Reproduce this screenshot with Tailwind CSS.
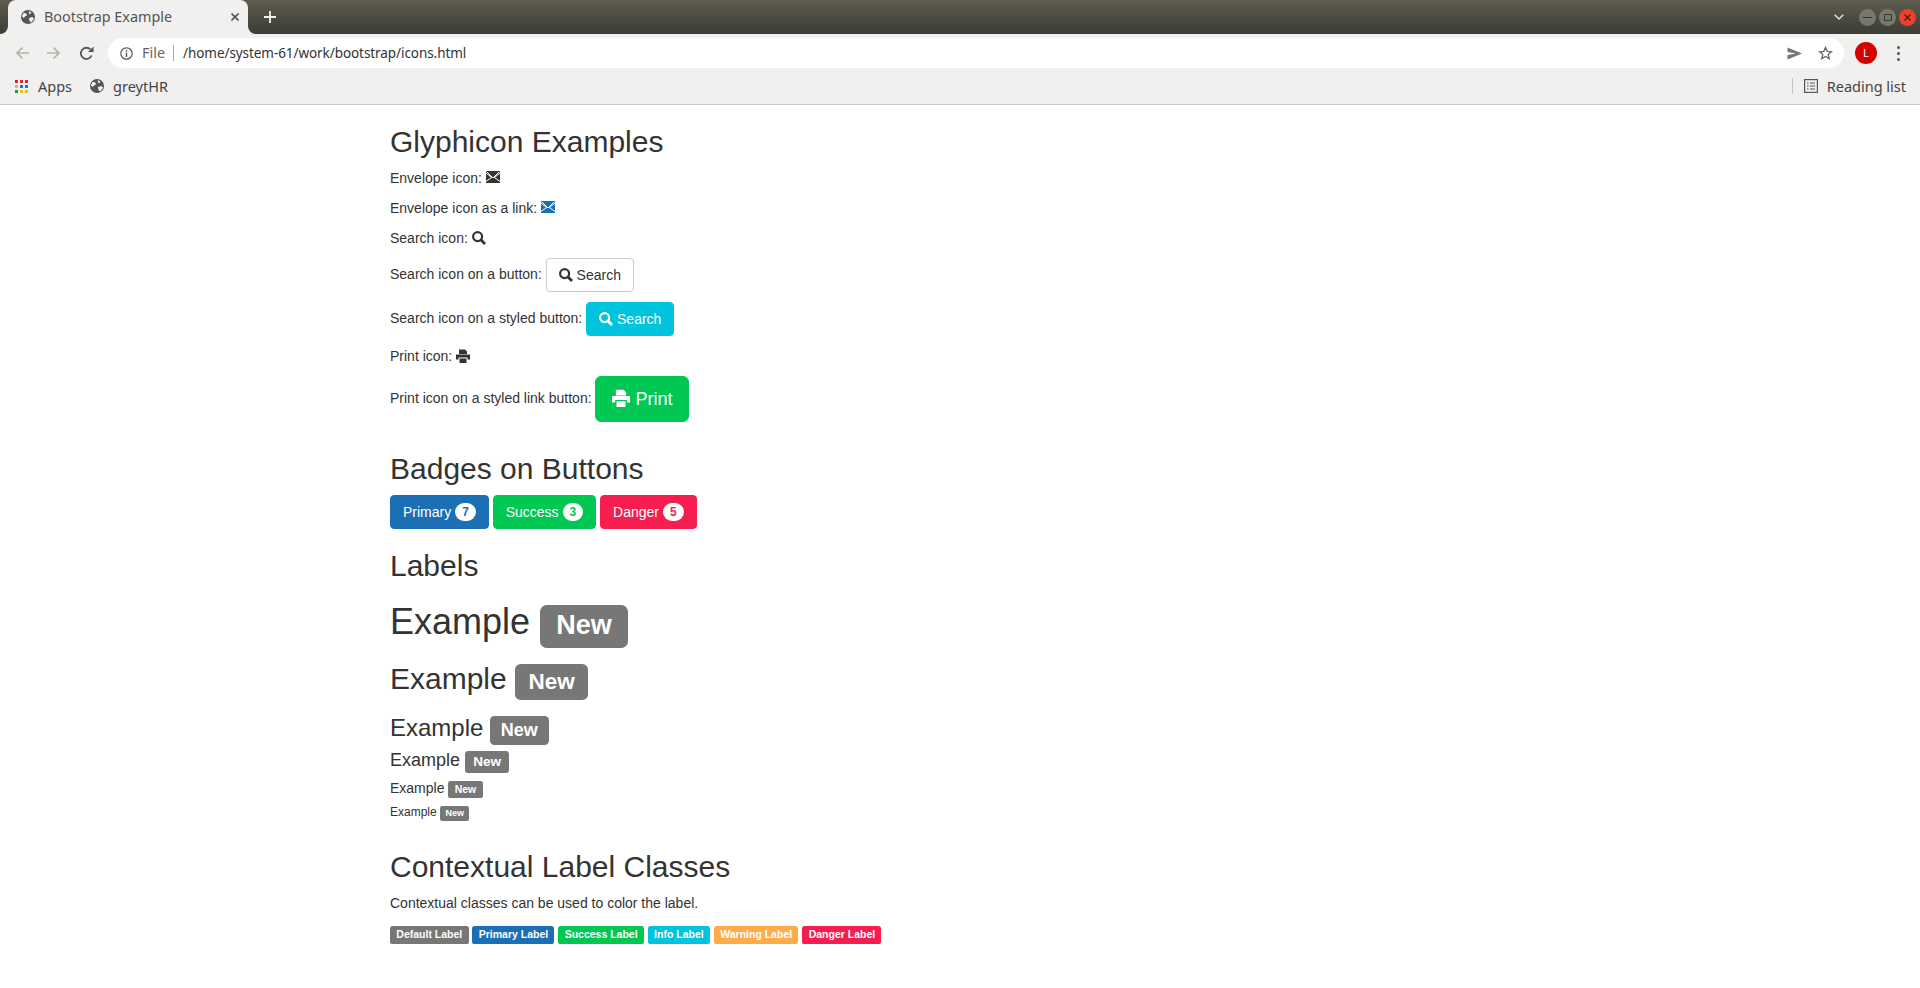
<!DOCTYPE html>
<html lang="en">
  <head>
    <meta charset="UTF-8" />
    <title>Bootstrap Example</title>
    <script src="https://cdn.jsdelivr.net/npm/@tailwindcss/browser@4"></script>
  </head>
  <body class="bg-white min-h-screen font-['Liberation_Sans',Arial,sans-serif] text-[14px] leading-[20px] text-[#333]">

    <!-- Browser tab strip -->
    <div class="h-[34px] flex items-center bg-gradient-to-b from-[#5e5d50] to-[#3d3c35] font-['Noto_Sans',sans-serif]">
      <div class="relative ml-2 w-[240px] h-[34px] bg-[#f1f0ee] rounded-t-[8px] flex items-center pl-[13px] pr-[9px] text-[#555]">
        <svg class="absolute left-[-8px] bottom-0" width="8" height="8" viewBox="0 0 8 8"><path d="M8 0V8H0A8 8 0 0 0 8 0Z" fill="#f1f0ee"/></svg>
        <svg class="absolute right-[-8px] bottom-0" width="8" height="8" viewBox="0 0 8 8"><path d="M0 0V8H8A8 8 0 0 1 0 0Z" fill="#f1f0ee"/></svg>
        <svg width="14" height="14" viewBox="0 0 16 16"><circle cx="8" cy="8" r="8" fill="#555"/><path d="M3 3l3 1 1 2-2 1-2 2-2-2zM9 1l3 2-2 2-1-2zM9 9l4-1 2 2-3 4-2-1z" fill="#f1f0ee"/></svg>
        <span class="ml-[9px] text-[14.4px] grow">Bootstrap Example</span>
        <svg width="8" height="8" viewBox="0 0 8 8"><path d="M0.5 0.5L7.5 7.5M7.5 0.5L0.5 7.5" stroke="#555" stroke-width="1.6"/></svg>
      </div>
      <svg class="ml-[16px]" width="12" height="12" viewBox="0 0 12 12"><path d="M6 0V12M0 6H12" stroke="#f1f0ee" stroke-width="1.8"/></svg>
      <div class="ml-auto flex items-center pr-[4px]">
        <svg width="10" height="6" viewBox="0 0 10 6"><path d="M0.7 0.7L5 5L9.3 0.7" fill="none" stroke="#e4e3dd" stroke-width="1.4"/></svg>
        <div class="ml-[15px] w-[17px] h-[17px] rounded-full bg-[#77766f] flex items-center justify-center"><div class="w-[9px] h-[1px] bg-[#35342e]"></div></div>
        <div class="ml-[3px] w-[17px] h-[17px] rounded-full bg-[#77766f] flex items-center justify-center"><div class="w-[8px] h-[7px] border border-[#35342e] rounded-[1px]"></div></div>
        <div class="ml-[3px] w-[17px] h-[17px] rounded-full bg-[#ee3f2a] flex items-center justify-center">
          <svg width="7" height="7" viewBox="0 0 7 7"><path d="M0.5 0.5L6.5 6.5M6.5 0.5L0.5 6.5" stroke="#5a120a" stroke-width="1.2"/></svg>
        </div>
      </div>
    </div>

    <!-- Toolbar -->
    <div class="h-[38px] bg-[#f1f0ee] flex items-center font-['Noto_Sans',sans-serif]">
      <svg class="ml-[15px]" width="14" height="14" viewBox="0 0 14 14"><path d="M14 7H2M7.5 1.5L2 7L7.5 12.5" fill="none" stroke="#b3b2b0" stroke-width="1.7"/></svg>
      <svg class="ml-[18px]" width="14" height="14" viewBox="0 0 14 14"><path d="M0 7H12M6.5 1.5L12 7L6.5 12.5" fill="none" stroke="#b3b2b0" stroke-width="1.7"/></svg>
      <svg class="ml-[18px]" width="15" height="15" viewBox="0 0 15 15"><path d="M12.6 9.5A5.6 5.6 0 1 1 11.4 3.4" fill="none" stroke="#555" stroke-width="1.8"/><path d="M9 6H14.5V0.5Z" fill="#555"/></svg>
      <div class="ml-[14px] w-[1736px] h-[30px] rounded-full bg-white flex items-center pl-[12px] pr-[11px]">
        <svg width="13" height="13" viewBox="0 0 13 13"><circle cx="6.5" cy="6.5" r="5.7" fill="none" stroke="#555" stroke-width="1.2"/><path d="M6.5 5.6V10M6.5 3V4.4" stroke="#555" stroke-width="1.4"/></svg>
        <span class="ml-[9px] text-[14.4px] text-[#666]">File</span>
        <span class="ml-[8px] w-[1px] h-[16px] bg-[#aaa]"></span>
        <span class="ml-[9px] text-[13.5px] tracking-[-0.07px] text-[#333]">/home/system-61/work/bootstrap/icons.html</span>
        <svg class="ml-auto" width="15" height="13" viewBox="0 0 15 13"><path d="M0.5 0.5L15 6.5L0.5 12.5V8L9 6.5L0.5 5Z" fill="#757575"/></svg>
        <svg class="ml-[16px]" width="15" height="14" viewBox="0 0 15 14"><path d="M7.5 1.4L9.2 5.3L13.4 5.7L10.2 8.5L11.2 12.6L7.5 10.4L3.8 12.6L4.8 8.5L1.6 5.7L5.8 5.3Z" fill="none" stroke="#666" stroke-width="1.3"/></svg>
      </div>
      <div class="ml-[11px] w-[22px] h-[22px] rounded-full bg-[#d50000] text-white text-[11px] flex items-center justify-center">L</div>
      <div class="ml-[20px] flex flex-col gap-[3px]">
        <div class="w-[3px] h-[3px] rounded-full bg-[#555]"></div>
        <div class="w-[3px] h-[3px] rounded-full bg-[#555]"></div>
        <div class="w-[3px] h-[3px] rounded-full bg-[#555]"></div>
      </div>
    </div>

    <!-- Bookmarks bar -->
    <div class="h-[33px] pb-[4px] bg-[#f1f0ee] border-b border-[#c9c9c9] flex items-center font-['Noto_Sans',sans-serif] text-[14.5px] text-[#444]">
      <svg class="ml-[15px]" width="13" height="13" viewBox="0 0 13 13">
        <rect width="3" height="3" fill="#ea1c3a"/><rect x="5" width="3" height="3" fill="#ea1c3a"/><rect x="10" width="3" height="3" fill="#ea1c3a"/>
        <rect y="5" width="3" height="3" fill="#fbbc05"/><rect x="5" y="5" width="3" height="3" fill="#1a73e8"/><rect x="10" y="5" width="3" height="3" fill="#1a73e8"/>
        <rect y="10" width="3" height="3" fill="#0f9d58"/><rect x="5" y="10" width="3" height="3" fill="#fbbc05"/><rect x="10" y="10" width="3" height="3" fill="#fbbc05"/>
      </svg>
      <span class="ml-[10px]">Apps</span>
      <svg class="ml-[18px]" width="14" height="14" viewBox="0 0 16 16"><circle cx="8" cy="8" r="8" fill="#555"/><path d="M3 3l3 1 1 2-2 1-2 2-2-2zM9 1l3 2-2 2-1-2zM9 9l4-1 2 2-3 4-2-1z" fill="#f1f0ee"/></svg>
      <span class="ml-[9px]">greytHR</span>
      <span class="ml-auto w-[1px] h-[16px] bg-[#c4c4c4]"></span>
      <svg class="ml-[11px]" width="14" height="14" viewBox="0 0 14 14"><rect x="0.6" y="0.6" width="12.8" height="12.8" fill="none" stroke="#555" stroke-width="1.2"/><path d="M3 4H4.6M6 4H11M3 7H4.6M6 7H11M3 10H4.6M6 10H11" stroke="#555" stroke-width="1.2"/></svg>
      <span class="ml-[9px] mr-[14px]">Reading list</span>
    </div>

    <!-- Page -->
    <div class="w-[1170px] mx-auto px-[15px]">
      <h2 class="mt-[20px] mb-[10px] text-[30px] leading-[33px] font-medium">Glyphicon Examples</h2>
      <p class="mb-[10px]">Envelope icon: <svg class="inline-block align-[-1px] w-[14px] h-[14px]" viewBox="0 0 14 14"><path d="M0 1H14V13H0Z" fill="#333"/><path d="M0 3L5.6 7.6L0 11.4M14 3L8.4 7.6L14 11.4M0.6 1.6L7 8L13.4 1.6" fill="none" stroke="#fff" stroke-width="1"/></svg></p>
      <p class="mb-[10px]">Envelope icon as a link: <a href="#" class="text-[#1b6fb5]"><svg class="inline-block align-[-1px] w-[14px] h-[14px]" viewBox="0 0 14 14"><path d="M0 1H14V13H0Z" fill="#1b6fb5"/><path d="M0 3L5.6 7.6L0 11.4M14 3L8.4 7.6L14 11.4M0.6 1.6L7 8L13.4 1.6" fill="none" stroke="#fff" stroke-width="1"/></svg></a></p>
      <p class="mb-[10px]">Search icon: <svg class="inline-block align-[-2px] w-[14px] h-[14px]" viewBox="0 0 14 14"><circle cx="5.6" cy="5.6" r="4.5" fill="none" stroke="#333" stroke-width="2.2"/><path d="M8.8 8.8L13 13" stroke="#333" stroke-width="2.8"/></svg></p>
      <p class="mb-[10px]">Search icon on a button:
        <button class="align-middle px-[12px] py-[6px] border border-[#ccc] rounded-[4px] bg-white text-[#333]"><svg class="inline-block align-[-2px] w-[14px] h-[14px]" viewBox="0 0 14 14"><circle cx="5.6" cy="5.6" r="4.5" fill="none" stroke="#333" stroke-width="2.2"/><path d="M8.8 8.8L13 13" stroke="#333" stroke-width="2.8"/></svg> Search</button>
      </p>
      <p class="mb-[10px]">Search icon on a styled button:
        <button class="align-middle px-[12px] py-[6px] border border-[#00c3de] rounded-[4px] bg-[#00c3de] text-white"><svg class="inline-block align-[-2px] w-[14px] h-[14px]" viewBox="0 0 14 14"><circle cx="5.6" cy="5.6" r="4.5" fill="none" stroke="#fff" stroke-width="2.2"/><path d="M8.8 8.8L13 13" stroke="#fff" stroke-width="2.8"/></svg> Search</button>
      </p>
      <p class="mb-[10px]">Print icon: <svg class="inline-block align-[-2px] w-[14px] h-[14px]" viewBox="0 0 14 14"><path d="M3 0.5H9L11 2.5V5H3ZM0 5.5H14V10.5H11.5V8.5H2.5V10.5H0ZM3.5 9.5H10.5V14H3.5Z" fill="#333"/></svg></p>
      <p class="mb-[10px]">Print icon on a styled link button:
        <a href="#" class="inline-block align-middle px-[16px] py-[10px] border border-[#00c853] rounded-[6px] bg-[#00c853] text-white text-[18px] leading-[24px]"><svg class="inline-block align-[-2px] w-[18px] h-[18px]" viewBox="0 0 14 14"><path d="M3 0.5H9L11 2.5V5H3ZM0 5.5H14V10.5H11.5V8.5H2.5V10.5H0ZM3.5 9.5H10.5V14H3.5Z" fill="#fff"/></svg> Print</a>
      </p>

      <h2 class="mt-[30px] mb-[10px] text-[30px] leading-[33px] font-medium">Badges on Buttons</h2>
      <div class="h-[34px]">
        <button class="px-[12px] py-[6px] border border-[#1b6fb5] rounded-[4px] bg-[#1b6fb5] text-white">Primary <span class="relative top-[-1px] inline-block min-w-[10px] px-[7px] py-[3px] rounded-[10px] bg-white text-[#1b6fb5] text-[12px] leading-[12px] font-bold">7</span></button>
        <button class="px-[12px] py-[6px] border border-[#00c853] rounded-[4px] bg-[#00c853] text-white">Success <span class="relative top-[-1px] inline-block min-w-[10px] px-[7px] py-[3px] rounded-[10px] bg-white text-[#00c853] text-[12px] leading-[12px] font-bold">3</span></button>
        <button class="px-[12px] py-[6px] border border-[#f61e50] rounded-[4px] bg-[#f61e50] text-white">Danger <span class="relative top-[-1px] inline-block min-w-[10px] px-[7px] py-[3px] rounded-[10px] bg-white text-[#f61e50] text-[12px] leading-[12px] font-bold">5</span></button>
      </div>

      <h2 class="mt-[20px] mb-[10px] text-[30px] leading-[33px] font-medium">Labels</h2>
      <h1 class="mt-[20px] text-[36px] leading-[39.6px] font-medium">Example <span class="px-[.6em] pt-[.2em] pb-[.3em] rounded-[.25em] bg-[#777] text-white text-[75%] leading-none font-bold">New</span></h1>
      <h2 class="mt-[20px] text-[30px] leading-[33px] font-medium">Example <span class="px-[.6em] pt-[.2em] pb-[.3em] rounded-[.25em] bg-[#777] text-white text-[75%] leading-none font-bold">New</span></h2>
      <h3 class="mt-[20px] text-[24px] leading-[26.4px] font-medium">Example <span class="px-[.6em] pt-[.2em] pb-[.3em] rounded-[.25em] bg-[#777] text-white text-[75%] leading-none font-bold">New</span></h3>
      <h4 class="mt-[10px] text-[18px] leading-[19.8px] font-medium">Example <span class="px-[.6em] pt-[.2em] pb-[.3em] rounded-[.25em] bg-[#777] text-white text-[75%] leading-none font-bold">New</span></h4>
      <h5 class="mt-[10px] text-[14px] leading-[15.4px] font-medium">Example <span class="px-[.6em] pt-[.2em] pb-[.3em] rounded-[.25em] bg-[#777] text-white text-[75%] leading-none font-bold">New</span></h5>
      <h6 class="mt-[10px] text-[12px] leading-[13.2px] font-medium">Example <span class="px-[.6em] pt-[.2em] pb-[.3em] rounded-[.25em] bg-[#777] text-white text-[75%] leading-none font-bold">New</span></h6>

      <h2 class="mt-[31px] mb-[10px] text-[30px] leading-[33px] font-medium">Contextual Label Classes</h2>
      <p class="mb-[10px]">Contextual classes can be used to color the label.</p>
      <p class="mb-[10px]">
        <span class="px-[.6em] pt-[.2em] pb-[.3em] rounded-[.25em] bg-[#777] text-white text-[75%] leading-none font-bold">Default Label</span>
        <span class="px-[.6em] pt-[.2em] pb-[.3em] rounded-[.25em] bg-[#1b6fb5] text-white text-[75%] leading-none font-bold">Primary Label</span>
        <span class="px-[.6em] pt-[.2em] pb-[.3em] rounded-[.25em] bg-[#00c853] text-white text-[75%] leading-none font-bold">Success Label</span>
        <span class="px-[.6em] pt-[.2em] pb-[.3em] rounded-[.25em] bg-[#00c3de] text-white text-[75%] leading-none font-bold">Info Label</span>
        <span class="px-[.6em] pt-[.2em] pb-[.3em] rounded-[.25em] bg-[#ffab4a] text-white text-[75%] leading-none font-bold">Warning Label</span>
        <span class="px-[.6em] pt-[.2em] pb-[.3em] rounded-[.25em] bg-[#f61e50] text-white text-[75%] leading-none font-bold">Danger Label</span>
      </p>
    </div>
  </body>
</html>
